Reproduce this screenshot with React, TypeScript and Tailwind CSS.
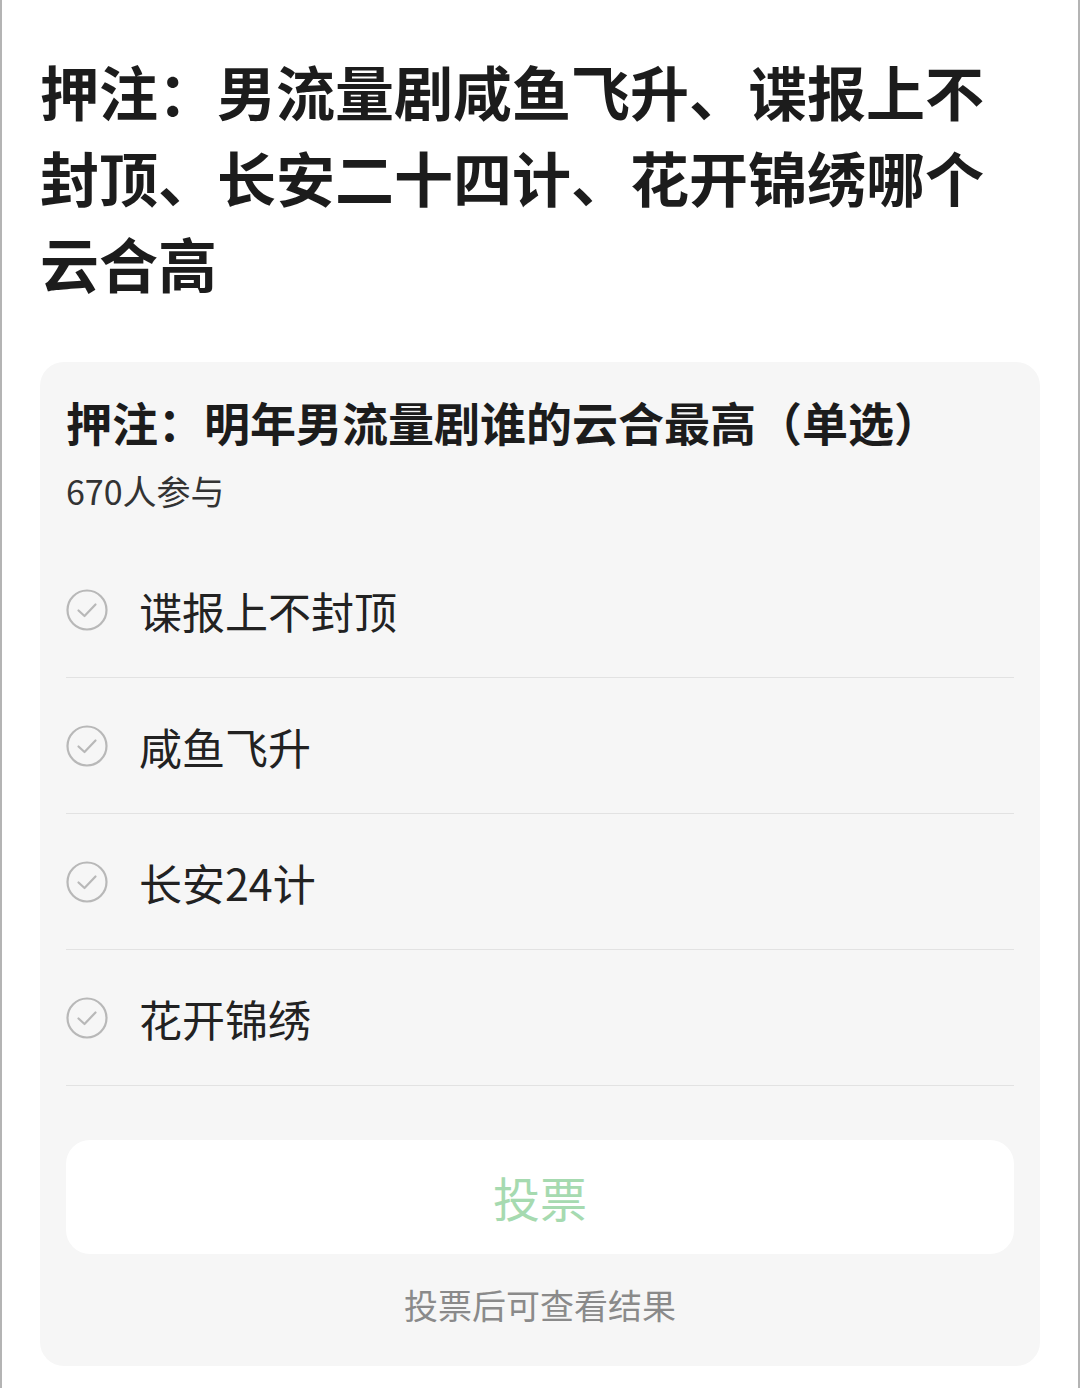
import React from 'react';

const options = ['谍报上不封顶', '咸鱼飞升', '长安24计', '花开锦绣'];

const CheckCircle: React.FC = () => (
    <svg width="42" height="42" viewBox="0 0 42 42" className="shrink-0">
        <circle cx="21" cy="21" r="19.5" fill="none" stroke="#b8b8b8" strokeWidth="2.2" />
        <path d="M12.5 21.5 L18.5 27 L29.5 15.5" fill="none" stroke="#b8b8b8" strokeWidth="2.2" strokeLinecap="round" strokeLinejoin="round" />
    </svg>
);

export default function App() {
    return (
        <div
            className="w-full min-h-[1388px] bg-white border-x-2 border-[#b4b4b4] px-[38px] pt-[48px]"
            style={{ fontFamily: '"Noto Sans CJK SC", "Noto Sans", sans-serif' }}
        >
            {/* 标题 */}
            <h1 className="text-[59px] leading-[86px] font-bold text-[#1c1c1c]">
                押注：男流量剧咸鱼飞升、谍报上不封顶、长安二十四计、花开锦绣哪个云合高
            </h1>

            {/* 投票卡片 */}
            <div className="mt-[56px] rounded-[24px] bg-[#f6f6f6] px-[26px] pt-[29px] pb-[39px]">
                <div className="text-[46px] leading-[60px] font-bold text-[#1c1c1c]">
                    押注：明年男流量剧谁的云合最高（单选）
                </div>
                <div className="mt-[18px] text-[34px] leading-[44px] text-[#333]">670人参与</div>

                <div className="mt-[29px]">
                    {options.map((o) => (
                        <div key={o} className="h-[136px] flex items-center border-b border-[#e2e2e2]">
                            <CheckCircle />
                            <span className="ml-[31px] text-[43px] leading-[56px] text-[#222]">{o}</span>
                        </div>
                    ))}
                </div>

                <button className="mt-[54px] w-full h-[114px] rounded-[24px] bg-white flex items-center justify-center text-[47px] text-[#a6dab0]">
                    投票
                </button>

                <div className="mt-[29px] text-center text-[34px] leading-[44px] text-[#8a8a8a]">
                    投票后可查看结果
                </div>
            </div>
        </div>
    );
}
